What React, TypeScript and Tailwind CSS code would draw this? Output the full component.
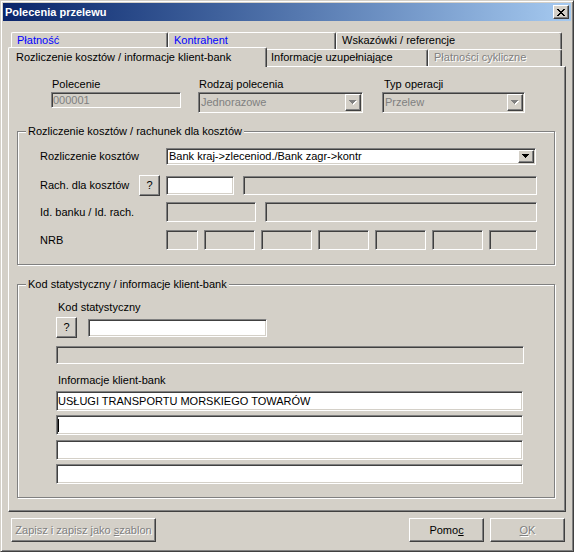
import React from "react";

const sunken =
  "border border-t-[#808080] border-l-[#808080] border-r-white border-b-white shadow-[inset_1px_1px_0_#404040,inset_-1px_-1px_0_#d4d0c8]";
const raised =
  "border border-t-white border-l-white border-r-[#404040] border-b-[#404040] shadow-[inset_-1px_-1px_0_#808080,inset_1px_1px_0_#d4d0c8]";
const etched = "border border-[#808080] shadow-[1px_1px_0_#ffffff,inset_1px_1px_0_#ffffff]";
const emboss = "text-[#808080] [text-shadow:1px_1px_0_#ffffff]";

function Arrow({ disabled }: { disabled?: boolean }) {
  const rows = [
    [0, 7],
    [1, 5],
    [2, 3],
    [3, 1],
  ];
  return (
    <svg width="8" height="5" viewBox="0 0 8 5" shapeRendering="crispEdges">
      {disabled &&
        rows.map(([y, w], i) => (
          <rect key={"s" + i} x={(7 - w) / 2 + 1} y={y + 1} width={w} height={1} fill="#ffffff" />
        ))}
      {rows.map(([y, w], i) => (
        <rect key={i} x={(7 - w) / 2} y={y} width={w} height={1} fill={disabled ? "#808080" : "#000000"} />
      ))}
    </svg>
  );
}

function Box({ className = "", white, children }: { className?: string; white?: boolean; children?: React.ReactNode }) {
  return (
    <div className={`${sunken} ${white ? "bg-white" : "bg-[#d4d0c8]"} flex items-center pl-[1px] shrink-0 overflow-hidden ${className}`}>
      {children}
    </div>
  );
}

function Combo({ className = "", text, disabled }: { className?: string; text: string; disabled?: boolean }) {
  return (
    <div className={`${sunken} ${disabled ? "bg-[#d4d0c8]" : "bg-white"} flex items-stretch p-[1px] shrink-0 ${className}`}>
      <span className={`flex-1 flex items-center pl-[1px] whitespace-nowrap ${disabled ? "text-[#808080]" : "text-black"}`}>{text}</span>
      <div className={`${raised} bg-[#d4d0c8] w-[16px] flex items-center justify-center`}>
        <Arrow disabled={disabled} />
      </div>
    </div>
  );
}

function QBtn({ className = "" }: { className?: string }) {
  return (
    <div className={`${raised} bg-[#d4d0c8] w-[21px] h-[21px] flex items-center justify-center shrink-0 ${className}`}>?</div>
  );
}

function Tab({
  w,
  label,
  tone = "black",
  selected,
}: {
  w: string;
  label: string;
  tone?: "black" | "blue" | "disabled";
  selected?: boolean;
}) {
  const color = tone === "blue" ? "text-[#0000ff]" : tone === "disabled" ? emboss : "text-black";
  return (
    <div
      className={`${w} shrink-0 bg-[#d4d0c8] border-t border-l border-r border-t-white border-l-white border-r-[#404040] rounded-t-[2px] shadow-[inset_-1px_0_0_#808080] whitespace-nowrap ${
        selected ? "h-[20px] -mt-[2px] -mb-[1px] -mx-[2px] pl-[7px] pt-[3px] relative z-10" : "h-[17px] pl-[5px] pt-[1px]"
      } ${color}`}
    >
      {label}
    </div>
  );
}

function Group({ title, className = "", children }: { title: string; className?: string; children: React.ReactNode }) {
  return (
    <div className={`${etched} relative w-[538px] ml-[8px] flex flex-col ${className}`}>
      <span className="absolute left-[8px] -top-[7px] px-[2px] bg-[#d4d0c8] whitespace-nowrap">{title}</span>
      {children}
    </div>
  );
}

export default function App() {
  return (
    <div className="w-[574px] h-[552px] bg-[#d4d0c8] border border-t-[#d4d0c8] border-l-[#d4d0c8] border-r-[#404040] border-b-[#404040] shadow-[inset_1px_1px_0_#ffffff,inset_-1px_-1px_0_#808080] p-[2px] flex flex-col text-[11px] leading-[13px] text-black font-['Liberation_Sans',Arial,sans-serif] select-none">
      {/* title bar */}
      <div className="h-[18px] shrink-0 bg-linear-to-r from-[#0a246a] to-[#a6caf0] flex items-center pl-[2px] pr-[2px]">
        <span className="text-white font-bold flex-1">Polecenia przelewu</span>
        <div className={`${raised} bg-[#d4d0c8] w-[16px] h-[14px] flex items-center justify-center`}>
          <svg width="8" height="7" viewBox="0 0 8 7" shapeRendering="crispEdges">
            {[0, 1, 2, 3, 4, 5, 6].map((y) => (
              <g key={y} fill="#000">
                <rect x={y} y={y} width={2} height={1} />
                <rect x={6 - y} y={y} width={2} height={1} />
              </g>
            ))}
          </svg>
        </div>
      </div>

      {/* tabs */}
      <div className="flex mt-[11px] ml-[8px]">
        <Tab w="w-[157px]" label="Płatność" tone="blue" />
        <Tab w="w-[168px]" label="Kontrahent" tone="blue" />
        <Tab w="w-[226px]" label="Wskazówki / referencje" />
      </div>
      <div className="flex ml-[7px]">
        <Tab w="w-[259px]" label="Rozliczenie kosztów / informacje klient-bank" selected />
        <Tab w="w-[163px]" label="Informacje uzupełniające" />
        <Tab w="w-[134px]" label="Płatności cykliczne" tone="disabled" />
      </div>

      {/* panel */}
      <div className="ml-[5px] w-[558px] h-[446px] shrink-0 border border-t-white border-l-white border-r-[#404040] border-b-[#404040] shadow-[inset_-1px_-1px_0_#808080] flex flex-col">
        {/* top row */}
        <div className="flex mt-[11px] ml-[42px]">
          <div className="flex flex-col w-[130px]">
            <span className="pl-[1px] h-[13px] mb-[1px]">Polecenie</span>
            <Box className="w-[130px] h-[16px] text-[#808080]">000001</Box>
          </div>
          <div className="flex flex-col w-[165px] ml-[17px]">
            <span className="pl-[1px] h-[13px] mb-[1px]">Rodzaj polecenia</span>
            <Combo className="w-[165px] h-[21px]" text="Jednorazowe" disabled />
          </div>
          <div className="flex flex-col w-[143px] ml-[19px]">
            <span className="pl-[2px] h-[13px] mb-[1px]">Typ operacji</span>
            <Combo className="w-[143px] h-[21px]" text="Przelew" disabled />
          </div>
        </div>

        {/* group 1 */}
        <Group title="Rozliczenie kosztów / rachunek dla kosztów" className="mt-[18px] h-[134px]">
          <div className="flex items-center pl-[22px] mt-[16px] h-[17px]">
            <span className="w-[126px]">Rozliczenie kosztów</span>
            <Combo className="w-[370px] h-[17px]" text="Bank kraj->zleceniod./Bank zagr->kontr" />
          </div>
          <div className="flex items-center pl-[22px] mt-[10px] h-[21px]">
            <span className="w-[99px]">Rach. dla kosztów</span>
            <QBtn />
            <Box white className="w-[68px] h-[19px] ml-[6px]" />
            <Box className="w-[294px] h-[19px] ml-[9px]" />
          </div>
          <div className="flex items-center pl-[22px] mt-[6px] h-[20px]">
            <span className="w-[126px]">Id. banku / Id. rach.</span>
            <Box className="w-[90px] h-[20px]" />
            <Box className="w-[272px] h-[20px] ml-[9px]" />
          </div>
          <div className="flex items-center pl-[22px] mt-[8px] h-[20px] gap-[6px]">
            <span className="w-[120px]">NRB</span>
            <Box className="w-[32px] h-[20px]" />
            <Box className="w-[51px] h-[20px]" />
            <Box className="w-[51px] h-[20px]" />
            <Box className="w-[51px] h-[20px]" />
            <Box className="w-[51px] h-[20px]" />
            <Box className="w-[51px] h-[20px]" />
            <Box className="w-[48px] h-[20px]" />
          </div>
        </Group>

        {/* group 2 */}
        <Group title="Kod statystyczny / informacje klient-bank" className="mt-[19px] h-[214px]">
          <div className="flex flex-col pl-[38px]">
            <span className="mt-[16px] h-[13px] pl-[2px]">Kod statystyczny</span>
            <div className="flex items-start mt-[3px]">
              <QBtn />
              <Box white className="w-[179px] h-[18px] ml-[11px] mt-[2px]" />
            </div>
            <Box className="w-[468px] h-[18px] mt-[8px]" />
            <span className="mt-[10px] h-[13px] pl-[2px]">Informacje klient-bank</span>
            <Box white className="w-[467px] h-[20px] mt-[4px]">
              USŁUGI TRANSPORTU MORSKIEGO TOWARÓW
            </Box>
            <Box white className="w-[467px] h-[20px] mt-[4px]">
              <div className="w-px h-[13px] bg-black" />
            </Box>
            <Box white className="w-[467px] h-[20px] mt-[5px]" />
            <Box white className="w-[467px] h-[20px] mt-[4px]" />
          </div>
        </Group>
      </div>

      {/* buttons */}
      <div className="flex mt-[6px] h-[24px]">
        <div className={`${raised} ml-[8px] w-[145px] h-[24px] flex items-center justify-center ${emboss}`}>
          <span>
            Zapisz i zapisz jako <span className="underline">s</span>zablon
          </span>
        </div>
        <div className={`${raised} ml-auto w-[75px] h-[24px] flex items-center justify-center`}>
          <span>
            Pomo<span className="underline">c</span>
          </span>
        </div>
        <div className={`${raised} ml-[6px] mr-[6px] w-[75px] h-[24px] flex items-center justify-center ${emboss}`}>
          <span>
            <span className="underline">O</span>K
          </span>
        </div>
      </div>
    </div>
  );
}
